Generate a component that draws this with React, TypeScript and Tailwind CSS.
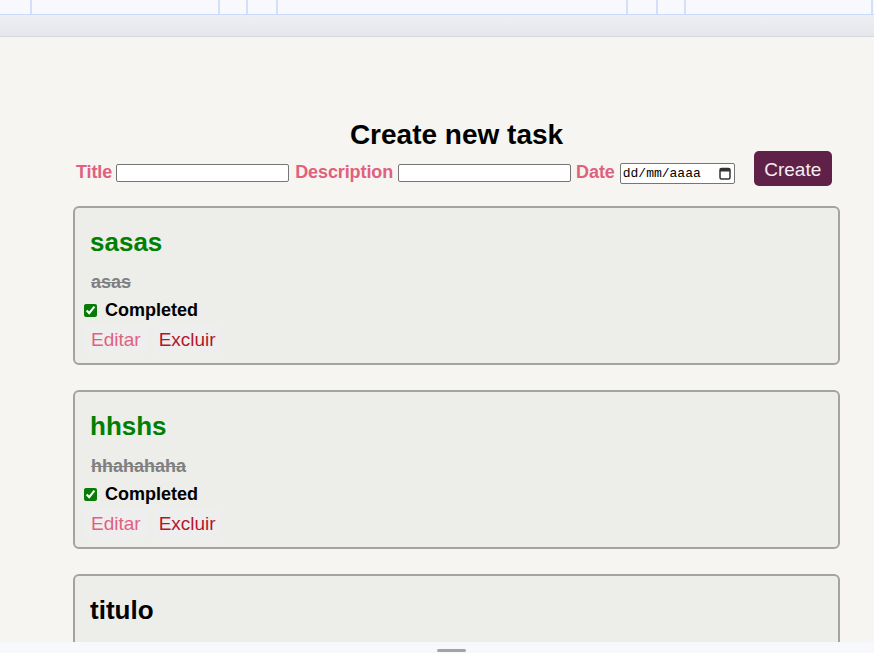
import React from 'react';

type Task = { title: string; description: string; completed: boolean };

const tasks: Task[] = [
    { title: 'sasas', description: 'asas', completed: true },
    { title: 'hhshs', description: 'hhahahaha', completed: true },
    { title: 'titulo', description: 'descrição', completed: false },
];

const topCells = [32, 188, 28, 30, 350, 30, 28, 187];

function TaskCard({ task }: { task: Task }) {
    return (
        <div className="border-2 border-[#a3a3a0] rounded-md bg-[#ededea] pl-[9px] pb-[10px] mb-[25px]">
            <h2 className={`mt-[19px] ml-[6px] text-[26px] leading-[30px] font-bold ${task.completed ? 'text-[#008000]' : 'text-black'}`}>
                {task.title}
            </h2>
            <p className={`mt-[14px] ml-[7px] text-[18px] leading-[22px] font-bold text-[#808080] ${task.completed ? 'line-through' : ''}`}>
                {task.description}
            </p>
            <label className="mt-[6px] flex items-center gap-[8px] text-[18px] leading-[22px] font-bold text-black">
                <input type="checkbox" checked={task.completed} readOnly className="w-[13px] h-[13px] m-0 accent-[#087a08]" />
                Completed
            </label>
            <div className="mt-[5px] flex gap-[5px]">
                <button className="h-[27px] px-[7px] bg-[#efeeee] text-[#e2607f] text-[19px] leading-[27px]">Editar</button>
                <button className="h-[27px] px-[6px] bg-[#efeeee] text-[#b3172a] text-[19px] leading-[27px]">Excluir</button>
            </div>
        </div>
    );
}

export default function App() {
    return (
        <div className="min-h-screen bg-[#f6f5f1] font-['Liberation_Sans',Arial,sans-serif]">
            <div className="h-[15px] bg-[#f7f9fd] border-b border-[#cbdaf8] flex">
                {topCells.map((w, i) => (
                    <div key={i} className="h-full border-r-2 border-[#d3e0fb] shrink-0" style={{ width: w }} />
                ))}
            </div>
            <div className="h-[22px] bg-gradient-to-b from-[#eeeff4] to-[#e6e7ed] border-b border-[#d8d8dc]" />

            <main className="ml-[73px] w-[767px] pt-[82px]">
                <h1 className="text-center text-[28px] leading-[32px] font-bold text-black">Create new task</h1>
                <form className="flex items-start pl-[3px] h-[35px]">
                    <span className="mt-[10px] text-[18px] leading-[22px] font-bold text-[#e0607e] tracking-[-0.1px]">Title</span>
                    <input type="text" className="mt-[13px] ml-[4px] w-[173px] h-[18px] bg-white border border-[#767676] rounded-[2px]" />
                    <span className="mt-[10px] ml-[6px] text-[18px] leading-[22px] font-bold text-[#e0607e] tracking-[-0.1px]">Description</span>
                    <input type="text" className="mt-[13px] ml-[5px] w-[173px] h-[18px] bg-white border border-[#767676] rounded-[2px]" />
                    <span className="mt-[10px] ml-[5px] text-[18px] leading-[22px] font-bold text-[#e0607e] tracking-[-0.1px]">Date</span>
                    <div className="mt-[12px] ml-[5px] w-[115px] h-[21px] bg-white border border-[#767676] rounded-[2px] flex items-center pl-[2px] pr-[3px]">
                        <span className="font-['Liberation_Mono',monospace] text-[13px] leading-[15px] text-black">dd/mm/aaaa</span>
                        <svg className="ml-auto" width="12" height="13" viewBox="0 0 12 13">
                            <rect x="1" y="1.5" width="10" height="10.5" rx="1.5" fill="none" stroke="#333" strokeWidth="1.5" />
                            <rect x="1" y="1.5" width="10" height="3" fill="#333" />
                        </svg>
                    </div>
                    <button type="button" className="ml-[19px] w-[78px] h-[35px] rounded-[5px] bg-[#5f2148] text-[#f4eef2] text-[19px] leading-[22px] pt-[8px] flex justify-center items-start">
                        Create
                    </button>
                </form>

                <div className="mt-[20px]">
                    {tasks.map((t, i) => (
                        <TaskCard key={i} task={t} />
                    ))}
                </div>
            </main>

            <div className="fixed bottom-0 left-0 right-0 h-[11px] bg-[#f7f8fc] flex items-end">
                <div className="ml-[437px] w-[29px] h-[3px] mb-[1px] bg-[#a3a3a3] rounded-sm" />
            </div>
        </div>
    );
}
